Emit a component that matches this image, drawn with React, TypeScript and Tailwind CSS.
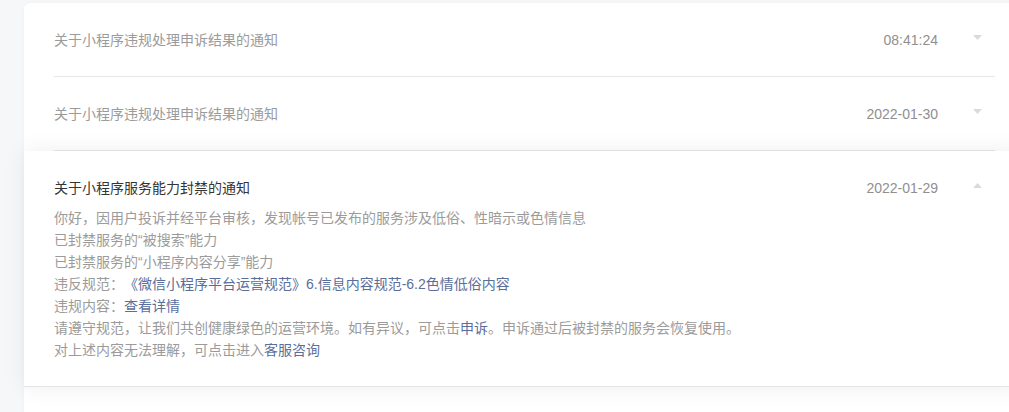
import React from "react";

const font = { fontFamily: '"Liberation Sans", "Noto Sans CJK SC", sans-serif' };

function Arrow({ up }: { up?: boolean }) {
  return (
    <div className="w-[16px] ml-[31px] mr-[10px] flex items-center justify-center -mt-[5px]">
      <svg width="9" height="5" viewBox="0 0 9 5">
        {up ? (
          <polygon points="4.5,0 9,5 0,5" fill="#dadada" />
        ) : (
          <polygon points="0,0 9,0 4.5,5" fill="#dadada" />
        )}
      </svg>
    </div>
  );
}

function Collapsed({ title, date }: { title: string; date: string }) {
  return (
    <div className="px-[30px]">
      <div className="flex items-center h-[74px] border-b border-[#e7e7e7]">
        <div className="flex-1 text-[14px] leading-[22px] text-[#9b9b9b]">{title}</div>
        <div className="text-[14px] leading-[22px] text-[#8f8f8f]">{date}</div>
        <Arrow />
      </div>
    </div>
  );
}

const link = "text-[#5a6e9c]";

export default function App() {
  return (
    <div
      className="w-[1009px] h-[412px] overflow-hidden bg-[#f6f7f9] [text-spacing-trim:space-all]"
      style={font}
    >
      <div className="ml-[24px] mt-[3px] w-[1001px] bg-white rounded-tl-[6px] shadow-[0_0_4px_rgba(0,0,0,0.03)]">
        <Collapsed title="关于小程序违规处理申诉结果的通知" date="08:41:24" />
        <Collapsed title="关于小程序违规处理申诉结果的通知" date="2022-01-30" />
        <div className="relative z-10 bg-white border-b border-[#e4e5e8] shadow-[0_0_22px_rgba(0,0,0,0.07)] px-[30px] pt-[26px] pb-[25px]">
          <div className="flex items-center">
            <div className="flex-1 text-[14px] leading-[22px] text-[#353535]">关于小程序服务能力封禁的通知</div>
            <div className="text-[14px] leading-[22px] text-[#8f8f8f]">2022-01-29</div>
            <Arrow up />
          </div>
          <div className="mt-[8px] text-[14px] leading-[22px] text-[#9b9b9b]">
            <p>你好，因用户投诉并经平台审核，发现帐号已发布的服务涉及低俗、性暗示或色情信息</p>
            <p>已封禁服务的“被搜索”能力</p>
            <p>已封禁服务的“小程序内容分享”能力</p>
            <p>
              违反规范：<span className={link}>《微信小程序平台运营规范》6.信息内容规范-6.2色情低俗内容</span>
            </p>
            <p>
              违规内容：<span className={link}>查看详情</span>
            </p>
            <p>
              请遵守规范，让我们共创健康绿色的运营环境。如有异议，可点击<span className={link}>申诉</span>。申诉通过后被封禁的服务会恢复使用。
            </p>
            <p>
              对上述内容无法理解，可点击进入<span className={link}>客服咨询</span>
            </p>
          </div>
        </div>
        <div className="h-[74px] bg-white" />
      </div>
    </div>
  );
}
